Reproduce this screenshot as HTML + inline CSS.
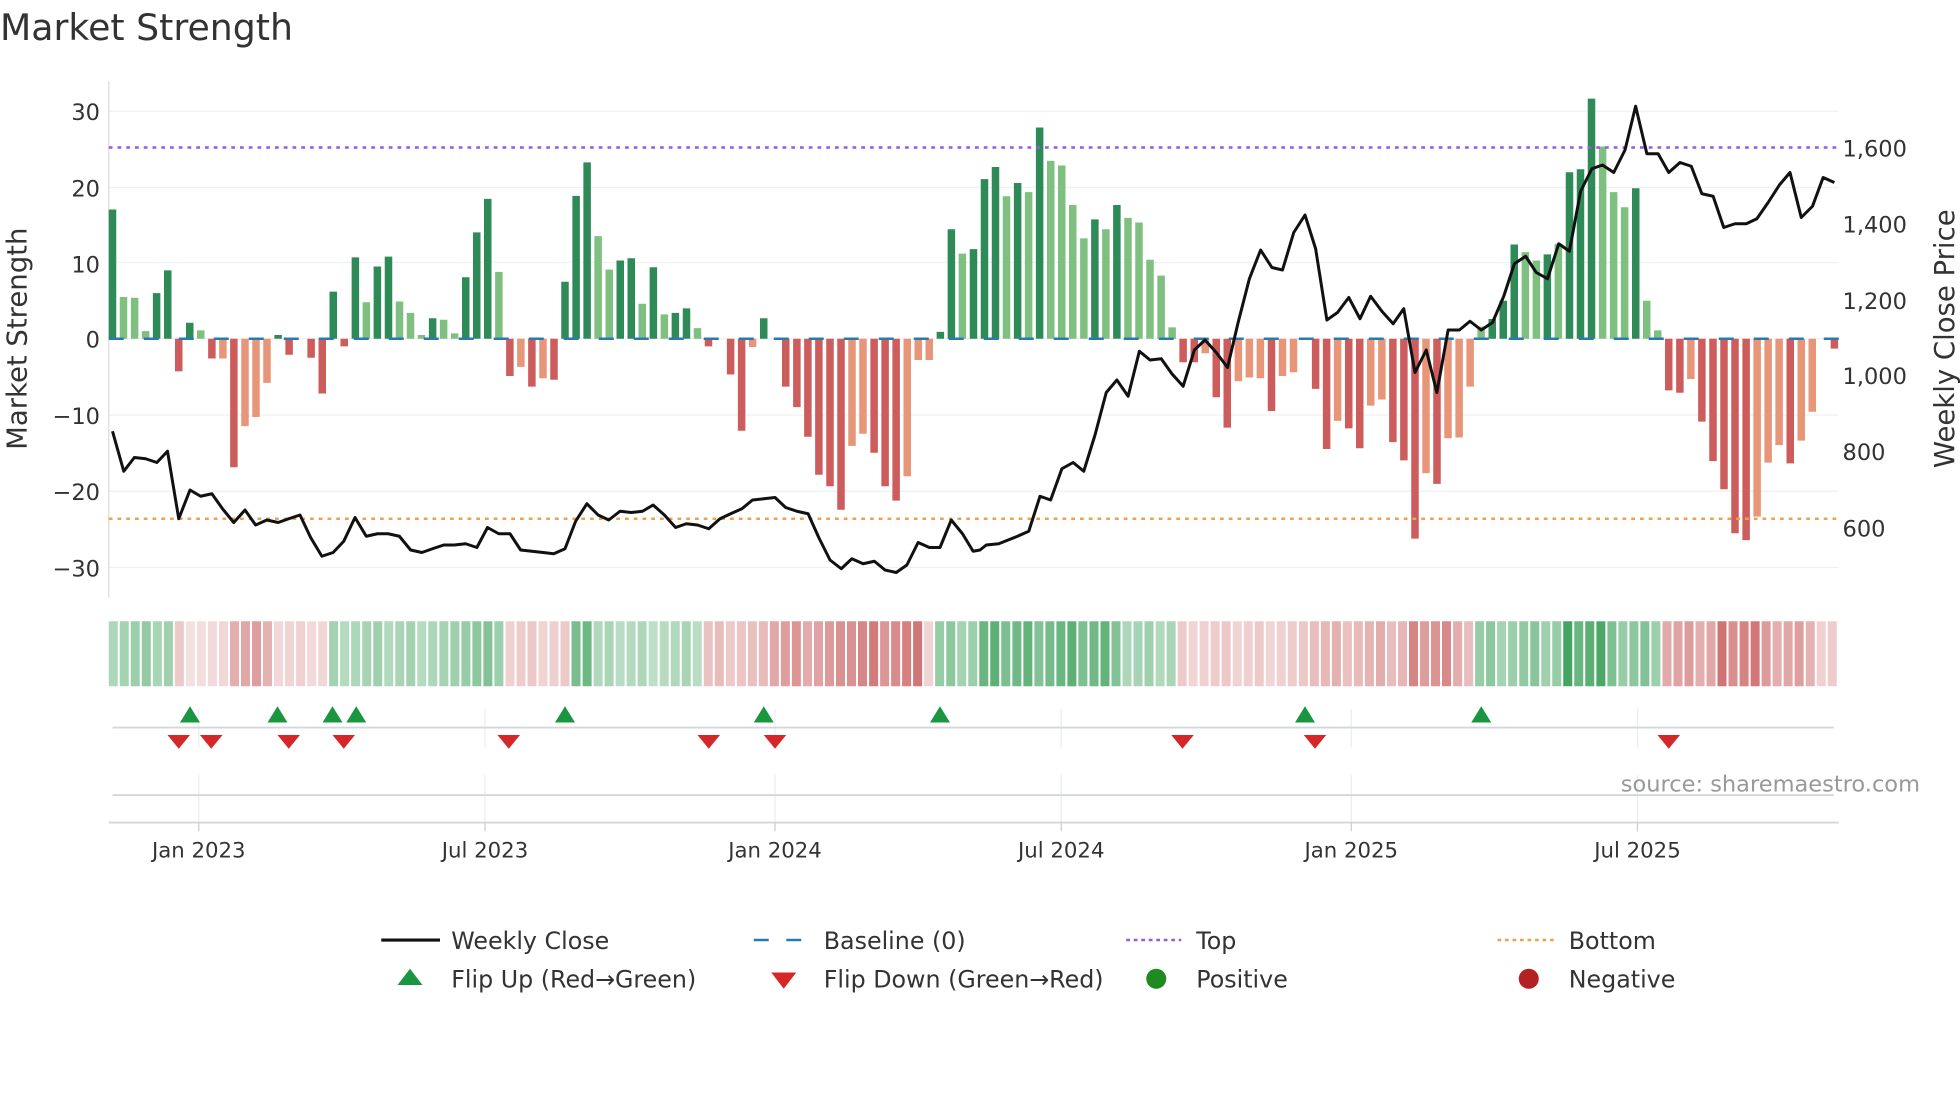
<!DOCTYPE html>
<html><head><meta charset="utf-8"><style>
html,body{margin:0;padding:0;background:#fff;width:1960px;height:1102px;overflow:hidden}
svg{display:block}
text{font-family:"DejaVu Sans","Liberation Sans",sans-serif;fill:#333}
</style></head><body>
<svg id="s" width="1960" height="1102" viewBox="0 0 1568 881.6" xmlns="http://www.w3.org/2000/svg">
<text x="0" y="32" font-size="29" fill="#333">Market Strength</text>
<g id="grid"></g>
<line x1="87" y1="65" x2="87" y2="478" stroke="#ddd" stroke-width="1"/>
<g id="bars"></g>
<line x1="87" y1="118" x2="1471" y2="118" stroke="#9b59d6" stroke-width="2" stroke-dasharray="3,4"/>
<line x1="87" y1="415" x2="1471" y2="415" stroke="#f0a050" stroke-width="2" stroke-dasharray="3,4"/>
<line x1="87" y1="271" x2="1471" y2="271" stroke="#2a7ab0" stroke-width="2" stroke-dasharray="12,16"/>
<polyline id="price" fill="none" stroke="#111" stroke-width="2.4" stroke-linejoin="round"/>
<g font-size="18" text-anchor="end">
<text x="80" y="96">30</text><text x="80" y="157">20</text><text x="80" y="218">10</text><text x="80" y="278">0</text>
<text x="80" y="339">−10</text><text x="80" y="400">−20</text><text x="80" y="461">−30</text>
</g>
<g font-size="18">
<text x="1474" y="125">1,600</text><text x="1474" y="186">1,400</text><text x="1474" y="247">1,200</text>
<text x="1474" y="307">1,000</text><text x="1474" y="368">800</text><text x="1474" y="429">600</text>
</g>
<text transform="translate(21,271) rotate(-90)" text-anchor="middle" font-size="22">Market Strength</text>
<text transform="translate(1563,271) rotate(-90)" text-anchor="middle" font-size="22">Weekly Close Price</text>
<g id="strip"></g>
<g stroke="#eaeef0" stroke-width="1">
<line x1="159" y1="567" x2="159" y2="598"/><line x1="388" y1="567" x2="388" y2="598"/><line x1="620" y1="567" x2="620" y2="598"/>
<line x1="849" y1="567" x2="849" y2="598"/><line x1="1081" y1="567" x2="1081" y2="598"/><line x1="1310" y1="567" x2="1310" y2="598"/>
<line x1="159" y1="620" x2="159" y2="658"/><line x1="388" y1="620" x2="388" y2="658"/><line x1="620" y1="620" x2="620" y2="658"/>
<line x1="849" y1="620" x2="849" y2="658"/><line x1="1081" y1="620" x2="1081" y2="658"/><line x1="1310" y1="620" x2="1310" y2="658"/>
</g>
<line x1="90" y1="582" x2="1467" y2="582" stroke="#d4d7da" stroke-width="1.5"/>
<line x1="90" y1="636" x2="1467" y2="636" stroke="#d4d7da" stroke-width="1.5"/>
<line x1="87" y1="658" x2="1471" y2="658" stroke="#d4d7da" stroke-width="1.5"/>
<g stroke="#ccc" stroke-width="1">
<line x1="159" y1="658" x2="159" y2="665"/><line x1="388" y1="658" x2="388" y2="665"/><line x1="620" y1="658" x2="620" y2="665"/>
<line x1="849" y1="658" x2="849" y2="665"/><line x1="1081" y1="658" x2="1081" y2="665"/><line x1="1310" y1="658" x2="1310" y2="665"/>
</g>
<g id="flips"></g>
<g font-size="17" text-anchor="middle">
<text x="159" y="686">Jan 2023</text><text x="388" y="686">Jul 2023</text><text x="620" y="686">Jan 2024</text>
<text x="849" y="686">Jul 2024</text><text x="1081" y="686">Jan 2025</text><text x="1310" y="686">Jul 2025</text>
</g>
<text x="1536" y="633" font-size="18" text-anchor="end" fill="#999" style="fill:#999">source: sharemaestro.com</text>
<g font-size="19">
<line x1="305" y1="752" x2="352" y2="752" stroke="#111" stroke-width="2.5"/><text x="361" y="759">Weekly Close</text>
<line x1="603" y1="752" x2="645" y2="752" stroke="#2a7ab0" stroke-width="2" stroke-dasharray="12,14"/><text x="659" y="759">Baseline (0)</text>
<line x1="901" y1="752" x2="945" y2="752" stroke="#9b59d6" stroke-width="2" stroke-dasharray="3,3"/><text x="957" y="759">Top</text>
<line x1="1198" y1="752" x2="1243" y2="752" stroke="#f0a050" stroke-width="2" stroke-dasharray="3,3"/><text x="1255" y="759">Bottom</text>
<polygon points="328,775 338,788 318,788" fill="#1a9641"/><text x="361" y="790">Flip Up (Red→Green)</text>
<polygon points="617,778 637,778 627,791" fill="#d62728"/><text x="659" y="790">Flip Down (Green→Red)</text>
<circle cx="925" cy="783" r="8" fill="#1f8a1f"/><text x="957" y="790">Positive</text>
<circle cx="1223" cy="783" r="8" fill="#b22222"/><text x="1255" y="790">Negative</text>
</g>
</svg>
<script>
var NS="http://www.w3.org/2000/svg";
function el(t,a,p){var e=document.createElementNS(NS,t);for(var k in a)e.setAttribute(k,a[k]);document.getElementById(p).appendChild(e);return e;}
[89,150,210,271,332,393,454].forEach(function(y){el("line",{x1:87,y1:y,x2:1471,y2:y,stroke:"#eef0f2","stroke-width":1},"grid");});
var B=[[17,'d'],[5.5,'l'],[5.4,'l'],[1,'l'],[6,'d'],[9,'d'],[-4.3,'r'],[2.1,'d'],[1.1,'l'],[-2.6,'r'],[-2.6,'s'],[-16.9,'r'],[-11.5,'s'],[-10.3,'s'],[-5.8,'s'],[0.5,'d'],[-2.1,'r'],[0,'r'],[-2.5,'r'],[-7.2,'r'],[6.2,'d'],[-1,'r'],[10.7,'d'],[4.8,'l'],[9.5,'d'],[10.8,'d'],[4.9,'l'],[3.4,'l'],[0.5,'l'],[2.7,'d'],[2.5,'l'],[0.7,'l'],[8.1,'d'],[14,'d'],[18.4,'d'],[8.8,'l'],[-4.9,'r'],[-3.7,'s'],[-6.3,'r'],[-5.2,'s'],[-5.4,'r'],[7.5,'d'],[18.8,'d'],[23.2,'d'],[13.5,'l'],[9.1,'l'],[10.3,'d'],[10.6,'d'],[4.6,'l'],[9.4,'d'],[3.2,'l'],[3.4,'d'],[4,'d'],[1.4,'l'],[-1,'r'],[0,'r'],[-4.7,'r'],[-12.1,'r'],[-1.1,'s'],[2.7,'d'],[0,'r'],[-6.3,'r'],[-9,'r'],[-12.9,'r'],[-17.9,'r'],[-19.4,'r'],[-22.5,'r'],[-14.1,'s'],[-12.5,'s'],[-15,'r'],[-19.4,'r'],[-21.3,'r'],[-18.1,'s'],[-2.8,'s'],[-2.8,'s'],[0.9,'d'],[14.4,'d'],[11.2,'l'],[11.8,'d'],
[21,'d'],[22.6,'d'],[18.75,'l'],[20.5,'d'],[19.3,'l'],[27.8,'d'],[23.4,'l'],[22.8,'l'],[17.6,'l'],[13.2,'l'],[15.7,'d'],[14.4,'l'],[17.6,'d'],[15.9,'l'],[15.3,'l'],[10.4,'l'],[8.3,'l'],[1.5,'l'],[-3.1,'r'],[-3.1,'r'],[-1.9,'s'],[-7.7,'r'],[-11.7,'r'],[-5.6,'s'],[-5.1,'s'],[-5.2,'s'],[-9.5,'r'],[-4.9,'s'],[-4.4,'s'],[0,'r'],[-6.6,'r'],[-14.5,'r'],[-10.8,'s'],[-11.8,'r'],[-14.4,'r'],[-8.8,'s'],[-8,'s'],[-13.6,'r'],[-16,'r'],[-26.3,'r'],[-17.7,'s'],[-19.1,'r'],[-13.1,'s'],[-13,'s'],[-6.3,'s'],[1.6,'l'],[2.6,'d'],[5,'d'],[12.4,'d'],[11.4,'l'],[10.3,'l'],[11.1,'d'],[12.5,'l'],[21.9,'d'],[22.3,'d'],[31.6,'d'],[25.3,'l'],[19.3,'l'],[17.3,'l'],[19.8,'d'],[5,'l'],[1.1,'l'],[-6.8,'r'],[-7.1,'r'],[-5.3,'s'],[-10.9,'r'],[-16.1,'r'],[-19.8,'r'],[-25.6,'r'],[-26.5,'r'],[-23.4,'s'],[-16.3,'s'],[-14,'s'],[-16.4,'r'],[-13.4,'s'],[-9.6,'s'],[0,'r'],[-1.3,'r']];
var C={d:"#2e8b57",l:"#7fc080",r:"#cd5c5c",s:"#e8967a"};
var step=(1467.5-90)/(B.length-1);
B.forEach(function(b,i){var x=90+i*step,h=Math.abs(b[0])*6.08;if(h<0.5)return;var y=b[0]>0?271-h:271;
el("rect",{x:(x-3).toFixed(1),y:y.toFixed(1),width:6,height:h.toFixed(1),fill:C[b[1]]},"bars");});
var P=[[90,345],[99,377],[107.5,366],[116.5,367],[125.5,370],[134,361],[143,415],[152,392],[160.5,397],[169.5,395],[178,407],[187,418],[196,408],[204.5,420],[213.5,416],[222.5,418],[231,415],[240,412],[248.5,430],[257.5,445],[266.5,442],[275,433],[284,414],[293,429],[302,427],[310.5,427],[319.5,429],[328.5,440],[337.5,442],[346,439],[355,436],[363.5,436],[372.5,435],[381.5,438],[390,422],[399,427],[408,427],[416.5,440],[425.5,441],[434.5,442],[443,443],[452,439],[460.5,417],[469.5,403],[478.5,412],[487,416],[496,409],[505,410],[514,409],[522.5,404],[531.5,412],[540.5,422],[549,419],[558,420],[567,423],[576,415],[584.5,411],[593.5,407],[602,400],[611,399],[620,398],[628.5,406],[637.5,409],[646.5,411],[655,430],[664,448],[673,455],[681.5,447],[690.5,451],[699.5,449],[708,456],[717,458],[725.5,452],[734.5,434],[743.5,438],[752,438],[761,416],[770,427],[778.5,441],
[784,440],[789,436],[799,435],[806.5,432],[814,429],[823,425],[832,397],[840.5,400],[849.5,375],[858.5,370],[867,377],[876,348],[885,314],[893.5,304],[902.5,317],[911.5,281],[920,288],[929,287],[937.5,299],[946.5,309],[955.5,280],[964,272],[973,282],[982,294],[990.5,258],[999.5,223],[1008.5,200],[1017.5,214],[1026,216],[1035,186],[1044,172],[1052.5,199],[1061.5,256],[1070,250],[1079,238],[1088,255],[1096.5,237],[1105.5,249],[1114.5,259],[1123,247],[1132,298],[1141,280],[1149.5,314],[1158.5,264],[1167.5,264],[1176,257],[1185,264],[1194,258],[1203,237],[1211.5,211],[1220.5,205],[1229,218],[1238,223],[1247,195],[1255.5,201],[1264.5,153],[1273.5,135],[1282,132],[1291,138],[1300,120],[1308.5,85],[1317.5,123],[1326.5,123],[1335,138],[1344,130],[1353,133],[1361.5,155],[1370.5,157],[1379,182],[1388,179],[1397,179],[1405.5,175],[1414.5,162],[1423.5,148],[1432,138],[1441,174],[1450,165],[1458.5,142],[1467.5,146]];
document.getElementById("price").setAttribute("points",P.map(function(p){return p.join(",")}).join(" "));
var S=[[87,140,'g',0.5],[140,150,'r',0.3],[150,185,'r',0.22],[185,215,'r',0.55],[215,265,'r',0.25],[265,280,'g',0.45],[280,370,'g',0.45],[370,400,'g',0.6],[400,455,'r',0.3],[455,478,'g',0.8],[478,560,'g',0.4],[560,615,'r',0.38],[615,680,'r',0.6],[680,735,'r',0.75],[735,745,'r',0.3],[745,780,'g',0.55],[780,900,'g',0.75],[900,942,'g',0.45],[942,1045,'r',0.3],[1045,1125,'r',0.45],[1125,1160,'r',0.7],[1160,1180,'r',0.45],[1180,1250,'g',0.55],[1250,1290,'g',0.9],[1290,1330,'g',0.6],[1330,1370,'r',0.55],[1370,1410,'r',0.8],[1410,1450,'r',0.55],[1450,1471,'r',0.3]];
function mix(a,t){return "rgb("+a.map(function(c){return Math.round(255+(c-255)*t)}).join(",")+")";}
var sw=(1471-87)/157;
for(var i=0;i<157;i++){var x=87+i*sw,cx=x+sw/2,seg=S[S.length-1];
for(var j=0;j<S.length;j++){if(cx>=S[j][0]&&cx<S[j][1]){seg=S[j];break;}}
var t=seg[3]*(0.85+0.3*((i*37)%7)/7);
var col=seg[2]=='g'?mix([60,160,90],Math.min(t,1)):mix([200,90,90],Math.min(t,1));
el("rect",{x:x.toFixed(1),y:497,width:(sw-1.6).toFixed(1),height:52,fill:col},"strip");}
[152,222,266,285,452,611,752,1044,1185].forEach(function(x){el("polygon",{points:x+",565 "+(x+8)+",578 "+(x-8)+",578",fill:"#1a9641"},"flips");});
[143,169,231,275,407,567,620,946,1052,1335].forEach(function(x){el("polygon",{points:(x-9)+",588 "+(x+9)+",588 "+x+",599",fill:"#d62728"},"flips");});
</script>
</body></html>
